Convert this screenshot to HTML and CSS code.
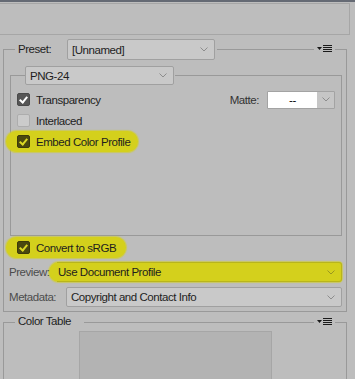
FILE: index.html
```html
<html>
	<head>
		<title>Save for Web</title>
		<link rel="stylesheet" href="styles.css">
	</head>
	<body>
		<div class="topline"></div>
		<div class="topbox"></div>

		<div class="group preset">
			<div class="ghead">
				<span class="seg seg-left"></span>
				<span class="glabel lb-preset">Preset:</span>
				<div class="select sel-preset">
					<span class="sel-text">[Unnamed]</span>
					<svg class="chev" viewBox="0 0 8 5"><polyline points="0.5,0.5 4,4 7.5,0.5"/></svg>
				</div>
				<span class="seg seg-fill"></span>
				<svg class="menu-icon" viewBox="0 0 15 8">
					<polygon points="0,2 5,2 2.5,5"/>
					<rect x="6" y="0" width="9" height="1"/>
					<rect x="6" y="2" width="9" height="1"/>
					<rect x="6" y="4" width="9" height="1"/>
					<rect x="6" y="6" width="9" height="1"/>
				</svg>
				<span class="seg seg-right"></span>
			</div>

			<div class="gbody preset-body">
				<div class="group inner">
					<div class="ghead inner-head">
						<span class="seg seg-left inner-left"></span>
						<div class="select sel-format">
							<span class="sel-text">PNG-24</span>
							<svg class="chev" viewBox="0 0 8 5"><polyline points="0.5,0.5 4,4 7.5,0.5"/></svg>
						</div>
						<span class="seg seg-fill seg-end"></span>
					</div>
					<div class="gbody inner-body">
						<div class="row">
							<span class="check checked"></span>
							<span class="ctext">Transparency</span>
							<div class="matte">
								<span class="matte-label">Matte:</span>
								<div class="matte-select">
									<span class="matte-value">--</span>
									<span class="matte-arrow">
										<svg class="chev" viewBox="0 0 8 5"><polyline points="0.5,0.5 4,4 7.5,0.5"/></svg>
									</span>
								</div>
							</div>
						</div>
						<div class="row">
							<span class="check"></span>
							<span class="ctext">Interlaced</span>
						</div>
						<div class="row">
							<span class="hl hl-embed">
								<span class="check hl-check"></span>
								<span class="ctext">Embed Color Profile</span>
							</span>
						</div>
					</div>
				</div>

				<div class="row row-convert">
					<span class="hl hl-convert">
						<span class="check hl-check"></span>
						<span class="ctext">Convert to sRGB</span>
					</span>
				</div>
				<div class="frow frow-preview">
					<span class="flabel lb-preview">Preview:</span>
					<div class="hl-pill">
						<div class="select sel-preview">
							<span class="sel-text">Use Document Profile</span>
							<svg class="chev" viewBox="0 0 8 5"><polyline points="0.5,0.5 4,4 7.5,0.5"/></svg>
						</div>
					</div>
				</div>
				<div class="frow frow-meta">
					<span class="flabel lb-meta">Metadata:</span>
					<div class="select sel-meta">
						<span class="sel-text">Copyright and Contact Info</span>
						<svg class="chev" viewBox="0 0 8 5"><polyline points="0.5,0.5 4,4 7.5,0.5"/></svg>
					</div>
				</div>
			</div>
		</div>

		<div class="group colortable">
			<div class="ghead ct-head">
				<span class="seg seg-left"></span>
				<span class="glabel lb-ct">Color Table</span>
				<span class="seg seg-fill"></span>
				<svg class="menu-icon" viewBox="0 0 15 8">
					<polygon points="0,2 5,2 2.5,5"/>
					<rect x="6" y="0" width="9" height="1"/>
					<rect x="6" y="2" width="9" height="1"/>
					<rect x="6" y="4" width="9" height="1"/>
					<rect x="6" y="6" width="9" height="1"/>
				</svg>
				<span class="seg seg-right"></span>
			</div>
			<div class="gbody ct-body">
				<div class="ct-swatches"></div>
			</div>
		</div>
	</body>
</html>
```

FILE: styles.css
```css
body {
	margin: 0;
	background-color: #bdbdbd;
	font-family: "Liberation Sans", Arial, sans-serif;
	font-size: 11.5px;
	letter-spacing: -0.45px;
	color: #1e1e1e;
	overflow: hidden;
}

.topline {
	height: 2px;
	background-color: #656a74;
}

.topbox {
	margin-top: 1px;
	margin-right: 5px;
	height: 30px;
	border: 1px solid #a6a6a6;
	border-left: none;
}

/* group boxes: header draws the top line, body draws the rest */
.group {
	margin-left: 3px;
	margin-right: 8px;
}

.preset {
	margin-top: 4px;
}

.ghead {
	display: flex;
	height: 21px;
}

.seg {
	box-sizing: border-box;
	margin-top: 10px;
	height: 11px;
	border-top: 1px solid #999999;
}

.seg-left {
	width: 12px;
	border-left: 1px solid #999999;
}

.seg-fill {
	flex: 1;
	margin-left: 2px;
}

.seg-right {
	width: 12px;
	border-right: 1px solid #999999;
}

.seg-end {
	border-right: 1px solid #999999;
	margin-left: 1px;
}

.menu-icon {
	width: 15px;
	height: 8px;
	margin: 6px 3px 0 3px;
	fill: #1a1a1a;
}

.glabel {
	line-height: 21px;
}

.lb-preset {
	margin-left: 3px;
	width: 49px;
}

.gbody {
	border: 1px solid #999999;
	border-top: none;
}

/* dropdowns */
.select {
	box-sizing: border-box;
	display: flex;
	align-items: center;
	background-color: #c9c9c9;
	border: 1px solid #a0a0a0;
	border-radius: 2px;
	padding-left: 4px;
	padding-right: 6px;
}

.sel-text {
	flex: 1;
	white-space: nowrap;
}

.chev {
	width: 8px;
	height: 5px;
	fill: none;
	stroke: #8d8d8d;
	stroke-width: 1;
}

.sel-preset {
	width: 148px;
	height: 21px;
}

.preset-body {
	padding: 6px 4px 4px 6px;
}

.inner {
	margin: 0;
}

.inner-head {
	height: 19px;
}

.inner-head .seg {
	margin-top: 9px;
	height: 10px;
}

.inner-left {
	width: 15px;
}

.sel-format {
	width: 149px;
	height: 19px;
}

.inner-body {
	box-sizing: border-box;
	height: 151px;
	padding: 4px 6px 0 6px;
}

.row {
	display: flex;
	align-items: center;
	height: 21px;
}

.check {
	box-sizing: border-box;
	width: 13px;
	height: 13px;
	border: 1px solid #adadad;
	border-radius: 2px;
	background-color: #cbcbcb;
	margin-right: 6px;
	position: relative;
}

.checked {
	background-color: #565656;
	border-color: #4a4a4a;
}

.checked::after, .hl-check::after {
	content: "";
	position: absolute;
	left: 3px;
	top: 1px;
	width: 3px;
	height: 6px;
	border-right: 2px solid #ffffff;
	border-bottom: 2px solid #ffffff;
	transform: rotate(40deg);
}

.hl {
	display: inline-flex;
	align-items: center;
	height: 21px;
	border-radius: 11px;
	background-color: #d4d01c;
	box-shadow: 0 0 1px 1px rgba(212, 208, 28, 0.6);
}

.hl-check {
	background-color: #4a480f;
	border-color: #3c3a0a;
}

.hl-check::after {
	border-color: #dcd824;
}

.hl-embed {
	margin-left: -11px;
	padding-left: 11px;
	padding-right: 8px;
}

.ctext {
	white-space: nowrap;
}

.matte {
	display: flex;
	align-items: center;
	margin-left: auto;
}

.matte-label {
	color: #333333;
	margin-right: 8px;
}

.matte-select {
	box-sizing: border-box;
	display: flex;
	height: 18px;
	border: 1px solid #a3a3a3;
	border-radius: 1px;
}

.matte-value {
	width: 49px;
	background-color: #ffffff;
	text-align: center;
	line-height: 16px;
	color: #000000;
}

.matte-arrow {
	width: 17px;
	display: flex;
	align-items: center;
	justify-content: center;
	background-color: #c6c6c6;
}

.row-convert {
	margin-top: 1px;
}

.hl-convert {
	margin-left: -4px;
	padding-left: 11px;
	padding-right: 10px;
}

.frow {
	display: flex;
	align-items: center;
	margin-left: -1px;
}

.frow-preview {
	margin-top: 4px;
}

.frow-meta {
	margin-top: 5px;
}

.flabel {
	flex-shrink: 0;
	color: #4c4c4c;
	white-space: nowrap;
}

.lb-preview {
	width: 40px;
	position: relative;
	z-index: 1;
}

.lb-meta {
	width: 57px;
}

.hl-pill {
	flex: 1;
	display: flex;
	padding-left: 8px;
	border-radius: 11px 4px 4px 11px;
	background-color: #d4d01c;
	box-shadow: 0 0 1px 1px rgba(212, 208, 28, 0.6);
}

.sel-preview {
	flex: 1;
	height: 20px;
	padding-left: 1px;
	background-color: #d4d01c;
	border-color: #b8b51c;
	border-left: none;
	border-radius: 0 3px 3px 0;
}

.sel-preview .chev {
	stroke: #9a9720;
}

.sel-meta {
	flex: 1;
	height: 20px;
}

/* color table */
.ct-head {
	height: 19px;
}

.lb-ct {
	margin-left: 3px;
	margin-right: 11px;
	line-height: 19px;
}

.ct-body {
	height: 60px;
	padding-left: 75px;
}

.ct-swatches {
	width: 193px;
	height: 60px;
	box-sizing: border-box;
	background-color: #b3b3b3;
	border: 1px solid #a6a6a6;
}
```
